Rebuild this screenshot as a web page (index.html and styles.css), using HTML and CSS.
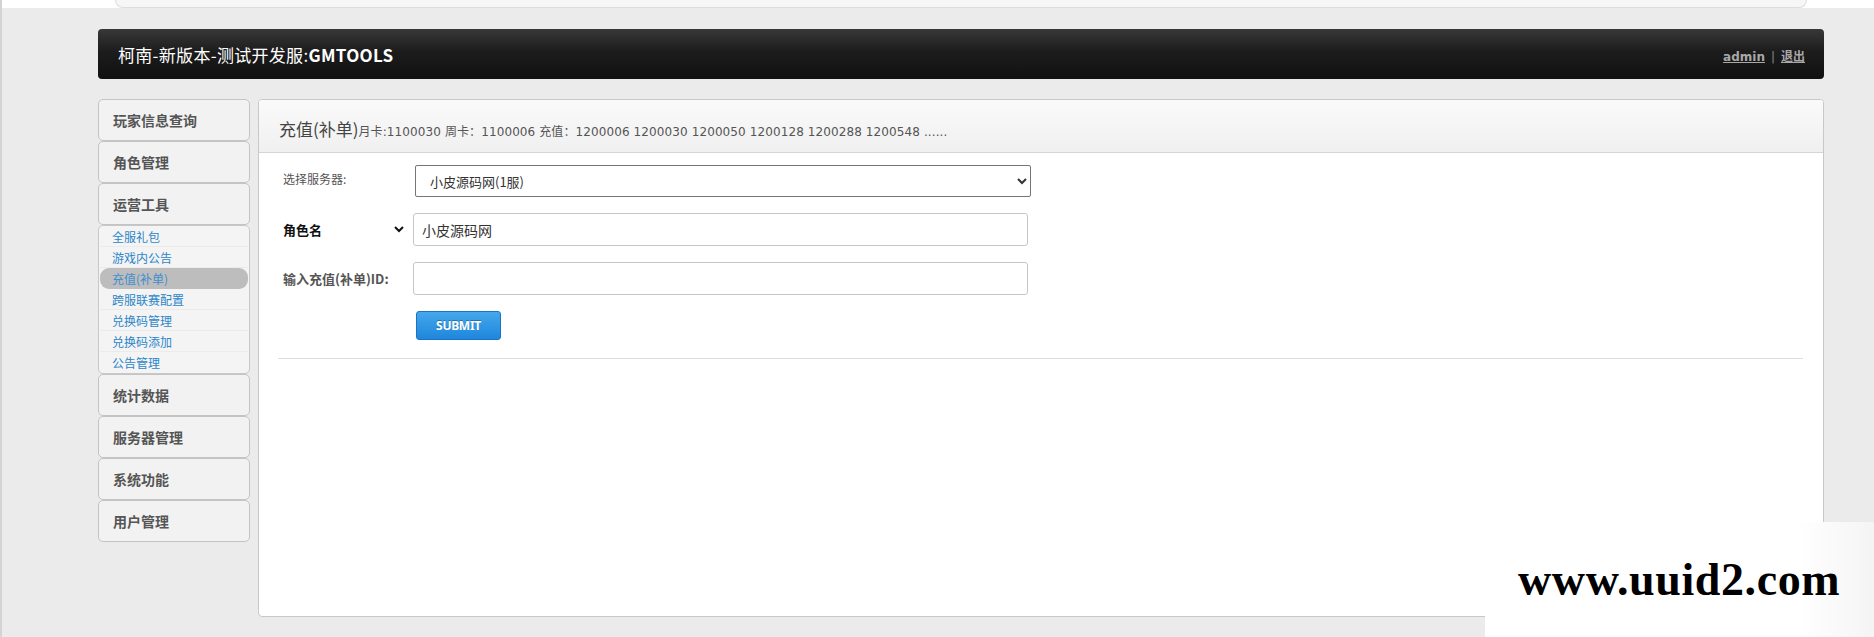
FILE: index.html
```html
<!DOCTYPE html>
<html lang="zh-CN">
<head>
<meta charset="utf-8">
<title>GMTOOLS</title>
<link rel="stylesheet" href="styles.css">
</head>
<body>
<div class="topstrip"><div class="topbox"></div></div>
<div class="wrap">
  <header class="header">
    <h1 class="brand">柯南-新版本-测试开发服:<b>GMTOOLS</b></h1>
    <div class="user"><a href="#">admin</a><span class="sep">|</span><a href="#">退出</a></div>
  </header>
  <div class="main">
    <nav class="sidebar">
      <div class="nav-item">玩家信息查询</div>
      <div class="nav-item">角色管理</div>
      <div class="nav-item">运营工具</div>
      <ul class="submenu">
        <li><a href="#">全服礼包</a></li>
        <li><a href="#">游戏内公告</a></li>
        <li class="active"><a href="#">充值(补单)</a></li>
        <li><a href="#">跨服联赛配置</a></li>
        <li><a href="#">兑换码管理</a></li>
        <li><a href="#">兑换码添加</a></li>
        <li><a href="#">公告管理</a></li>
      </ul>
      <div class="nav-item">统计数据</div>
      <div class="nav-item">服务器管理</div>
      <div class="nav-item">系统功能</div>
      <div class="nav-item">用户管理</div>
    </nav>
    <section class="panel">
      <div class="panel-head">
        <span class="panel-title">充值(补单)</span><span class="panel-note">月卡:1100030 周卡：1100006 充值：1200006 1200030 1200050 1200128 1200288 1200548 ......</span>
      </div>
      <div class="panel-body">
        <form class="form">
          <label class="lbl">选择服务器:</label>
          <select class="ctl server"><option>小皮源码网(1服)</option></select>
          <select class="lbl-select"><option>角色名</option></select>
          <input class="ctl txt" type="text" value="小皮源码网">
          <label class="lbl strong">输入充值(补单)ID:</label>
          <input class="ctl txt" type="text" value="">
          <span></span>
          <div><button type="button" class="btn">SUBMIT</button></div>
        </form>
        <div class="rule"></div>
      </div>
    </section>
  </div>
</div>
<div class="watermark"><span>www.uuid2.com</span></div>
</body>
</html>
```

FILE: styles.css
```css
html, body {
  margin: 0;
  padding: 0;
}
body {
  background: #ebebeb;
  font-family: "Noto Sans CJK SC", "Noto Sans", sans-serif;
  width: 1874px;
  height: 637px;
  overflow: hidden;
  position: relative;
  border-left: 2px solid #d4d4d4;
  box-sizing: border-box;
}
.topstrip {
  height: 8px;
  background: #fff;
  margin-left: -2px;
}
.topbox {
  margin-left: 115px;
  width: 1690px;
  height: 7px;
  background: #f6f6f6;
  border: 1px solid #dcdcdc;
  border-top: none;
  border-radius: 0 0 8px 8px;
}
.wrap {
  margin-left: 96px;
  width: 1726px;
}
.header {
  margin-top: 21px;
  height: 50px;
  box-sizing: border-box;
  border-radius: 4px;
  background: linear-gradient(#383838, #1c1c1c 45%, #111);
  display: flex;
  align-items: center;
  justify-content: space-between;
  padding: 0 19px 0 20px;
}
.brand {
  margin: 0;
  color: #fff;
  font-size: 17px;
  font-weight: normal;
  letter-spacing: 0.3px;
}
.brand b {
  font-weight: bold;
}
.user {
  font-family: "DejaVu Sans", "Noto Sans CJK SC", sans-serif;
  font-size: 12px;
  font-weight: bold;
  color: #888;
  padding-top: 2px;
}
.user a {
  color: #a8a8a8;
  text-decoration: underline;
}
.user .sep {
  margin: 0 6px;
  font-weight: normal;
}
.main {
  margin-top: 20px;
  display: flex;
  gap: 8px;
  align-items: flex-start;
}
.sidebar {
  width: 152px;
  flex: none;
}
.nav-item {
  height: 42px;
  box-sizing: border-box;
  border: 1px solid #c4c4c4;
  border-radius: 5px;
  background: #f2f2f2;
  display: flex;
  align-items: center;
  padding-left: 14px;
  font-size: 14px;
  font-weight: bold;
  color: #555;
}
.submenu {
  list-style: none;
  margin: 0;
  padding: 0 1px;
  border: 1px solid #c8c8c8;
  border-radius: 5px;
  background: #f4f4f4;
}
.submenu li {
  height: 21px;
  box-sizing: border-box;
  border-bottom: 1px solid #ebebeb;
  display: flex;
  align-items: center;
  padding-left: 12px;
  font-size: 12px;
}
.submenu li:last-child {
  border-bottom: none;
}
.submenu a {
  color: #2c86c8;
  text-decoration: none;
}
.submenu li.active {
  background: #bdbdbd;
  border-radius: 9px;
  border-bottom-color: transparent;
}
.submenu li.active a {
  color: #3e8fcf;
}
.panel {
  flex: 1;
  height: 518px;
  box-sizing: border-box;
  border: 1px solid #c8c8c8;
  border-radius: 4px;
  background: #fff;
  overflow: hidden;
}
.panel-head {
  height: 53px;
  box-sizing: border-box;
  background: linear-gradient(#fafafa, #f0f0f0);
  border-bottom: 1px solid #d4d4d4;
  display: flex;
  align-items: baseline;
  padding: 16px 0 0 20px;
}
.panel-title {
  font-size: 17px;
  color: #444;
}
.panel-note {
  font-family: "DejaVu Sans", "Noto Sans CJK SC", sans-serif;
  font-size: 12px;
  letter-spacing: 0.1px;
  color: #555;
}
.panel-body {
  padding: 12px 20px 0 19px;
}
.form {
  display: grid;
  grid-template-columns: 132px 616px;
  row-gap: 16px;
  align-items: center;
  padding-left: 5px;
}
.lbl {
  font-size: 12px;
  color: #555;
  margin-top: -6px;
}
.lbl.strong {
  font-size: 13px;
  font-weight: bold;
  margin-top: 0;
}
.ctl {
  box-sizing: border-box;
  font-family: "Noto Sans CJK SC", "Noto Sans", sans-serif;
  font-size: 13px;
  color: #333;
  background: #fff;
  margin: 0;
}
.server {
  height: 32px;
  border: 1px solid #767676;
  border-radius: 2px;
  padding-left: 10px;
}
.txt {
  height: 33px;
  width: 615px;
  border: 1px solid #c6c6c6;
  border-radius: 3px;
  padding: 0 8px;
  font-size: 14px;
  margin-left: -2px;
}
.lbl-select {
  width: 128px;
  border: none;
  background: transparent;
  font-family: "Noto Sans CJK SC", sans-serif;
  font-size: 13px;
  font-weight: bold;
  color: #111;
  padding: 0;
  margin-left: -4px;
}
.btn {
  margin-left: 1px;
  width: 85px;
  height: 29px;
  border: 1px solid #1b74c2;
  border-radius: 3px;
  background: linear-gradient(#45a8ec, #1e86dc);
  color: #fff;
  font-family: "Noto Sans", sans-serif;
  font-weight: bold;
  font-size: 12px;
  letter-spacing: -0.3px;
  text-shadow: 0 -1px 0 rgba(0, 0, 0, 0.3);
  padding: 0;
}
.rule {
  margin-top: 18px;
  border-top: 1px solid #dedede;
}
.watermark {
  position: absolute;
  left: 1483px;
  top: 522px;
  width: 391px;
  height: 115px;
  background: linear-gradient(90deg, #fff 80%, #f4f4f4);
}
.watermark span {
  position: absolute;
  left: 33px;
  top: 31px;
  font-family: "Liberation Serif", serif;
  font-weight: bold;
  font-size: 46px;
  color: #000;
  letter-spacing: 0.6px;
}
```
